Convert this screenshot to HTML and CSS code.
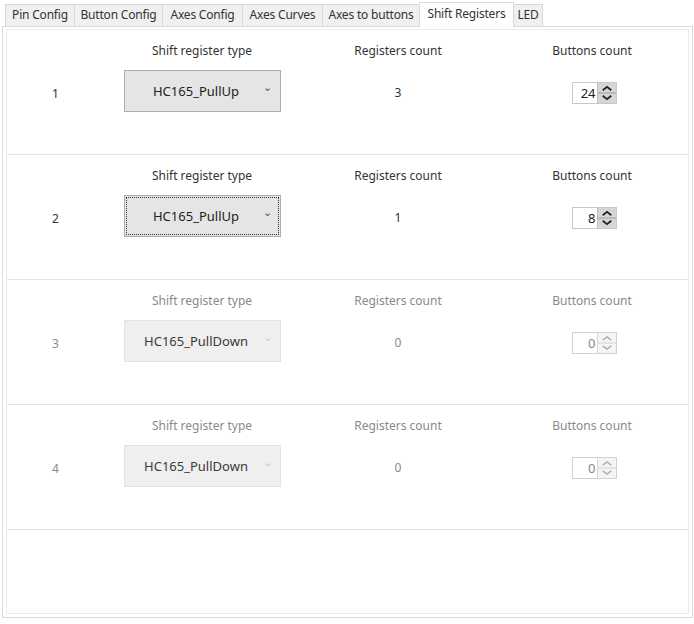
FILE: index.html
```html
<!DOCTYPE html>
<html>
<head>
<meta charset="utf-8">
<link rel="stylesheet" href="styles.css">
</head>
<body>
<div class="app">
  <div class="tabs">
    <div class="tab w1">Pin Config</div>
    <div class="tab w2">Button Config</div>
    <div class="tab w3">Axes Config</div>
    <div class="tab w3">Axes Curves</div>
    <div class="tab w4">Axes to buttons</div>
    <div class="tab active">Shift Registers</div>
    <div class="tab w5">LED</div>
  </div>
  <div class="pane">
    <div class="inner">
      <div class="row">
        <div class="num">1</div>
        <div class="col"><div class="hdr">Shift register type</div><div class="combo"><span>HC165_PullUp</span><span class="arrow">&#8964;</span></div></div>
        <div class="col"><div class="hdr">Registers count</div><div class="val">3</div></div>
        <div class="col"><div class="hdr">Buttons count</div>
          <div class="spin"><div class="sv">24</div><div class="sb"><svg width="19" height="20" viewBox="0 0 19 20"><path d="M5 7 L9.5 3.5 L14 7" fill="none" stroke="#222" stroke-width="2"/><path d="M5 13 L9.5 16.5 L14 13" fill="none" stroke="#222" stroke-width="2"/><line x1="0" y1="10" x2="19" y2="10" stroke="#9a9a9a"/></svg></div></div>
        </div>
      </div>
      <div class="row">
        <div class="num">2</div>
        <div class="col"><div class="hdr">Shift register type</div><div class="combo focus"><span>HC165_PullUp</span><span class="arrow">&#8964;</span></div></div>
        <div class="col"><div class="hdr">Registers count</div><div class="val">1</div></div>
        <div class="col"><div class="hdr">Buttons count</div>
          <div class="spin"><div class="sv">8</div><div class="sb"><svg width="19" height="20" viewBox="0 0 19 20"><path d="M5 7 L9.5 3.5 L14 7" fill="none" stroke="#222" stroke-width="2"/><path d="M5 13 L9.5 16.5 L14 13" fill="none" stroke="#222" stroke-width="2"/><line x1="0" y1="10" x2="19" y2="10" stroke="#9a9a9a"/></svg></div></div>
        </div>
      </div>
      <div class="row disabled">
        <div class="num">3</div>
        <div class="col"><div class="hdr">Shift register type</div><div class="combo"><span>HC165_PullDown</span><span class="arrow">&#8964;</span></div></div>
        <div class="col"><div class="hdr">Registers count</div><div class="val">0</div></div>
        <div class="col"><div class="hdr">Buttons count</div>
          <div class="spin"><div class="sv">0</div><div class="sb"><svg width="19" height="20" viewBox="0 0 19 20"><path d="M5 7 L9.5 3.5 L14 7" fill="none" stroke="#b0b0b0" stroke-width="1.5"/><path d="M5 13 L9.5 16.5 L14 13" fill="none" stroke="#b0b0b0" stroke-width="1.5"/><line x1="0" y1="10" x2="19" y2="10" stroke="#d0d0d0"/></svg></div></div>
        </div>
      </div>
      <div class="row disabled">
        <div class="num">4</div>
        <div class="col"><div class="hdr">Shift register type</div><div class="combo"><span>HC165_PullDown</span><span class="arrow">&#8964;</span></div></div>
        <div class="col"><div class="hdr">Registers count</div><div class="val">0</div></div>
        <div class="col"><div class="hdr">Buttons count</div>
          <div class="spin"><div class="sv">0</div><div class="sb"><svg width="19" height="20" viewBox="0 0 19 20"><path d="M5 7 L9.5 3.5 L14 7" fill="none" stroke="#b0b0b0" stroke-width="1.5"/><path d="M5 13 L9.5 16.5 L14 13" fill="none" stroke="#b0b0b0" stroke-width="1.5"/><line x1="0" y1="10" x2="19" y2="10" stroke="#d0d0d0"/></svg></div></div>
        </div>
      </div>
    </div>
  </div>
</div>
</body>
</html>
```
FILE: styles.css
```css
* { box-sizing: border-box; }
html, body { margin: 0; padding: 0; background: #fff; }
body {
  width: 694px; height: 624px;
  font-family: "Noto Sans", "Open Sans", sans-serif;
  font-size: 12px;
  color: #333;
}
.app { padding: 2px 2px 0 2px; }
.tabs {
  display: flex;
  padding-left: 3px;
  height: 24px;
  align-items: flex-end;
  position: relative;
  z-index: 1;
}
.tab {
  height: 22px;
  line-height: 20px;
  text-align: center;
  background: #f0f0f0;
  border: 1px solid #d9d9d9;
  border-left: none;
  border-bottom: none;
  white-space: nowrap;
  letter-spacing: -0.2px;
}
.w1 { width: 70px; border-left: 1px solid #d9d9d9; }
.w2 { width: 88px; }
.w3 { width: 80px; }
.w4 { width: 97px; }
.w5 { width: 29px; border-left: none; }
.tab.active {
  width: 95px;
  height: 25px;
  line-height: 22px;
  background: #fff;
  border-left: 1px solid #d9d9d9;
  margin-left: -1px;
  margin-bottom: -1px;
}
.pane {
  border: 1px solid #d9d9d9;
  height: 592px;
  width: 691px;
  padding: 2px 3px 3px 3px;
  background: #fff;
}
.inner {
  border: 1px solid #eaeaea;
  height: 100%;
}
.row {
  display: grid;
  grid-template-columns: 97px 196px 196px 1fr;
  height: 125px;
  border-bottom: 1px solid #e3e3e3;
}
.num {
  text-align: center;
  padding-top: 55px;
}
.col {
  display: flex;
  flex-direction: column;
  align-items: center;
}
.hdr {
  margin-top: 12px;
  height: 17px;
  line-height: 17px;
}
.val {
  margin-top: 25px;
}
.combo {
  margin-top: 11px;
  width: 157px;
  height: 42px;
  border: 1px solid #adadad;
  background: #e5e5e5;
  display: flex;
  align-items: center;
  justify-content: center;
  position: relative;
  font-size: 13px;
  color: #222;
}
.combo span:first-child { margin-right: 12px; }
.combo.focus { outline: 1px dotted #333; outline-offset: -3px; }
.arrow {
  position: absolute;
  right: 8px;
  top: 8px;
  font-size: 11px;
  color: #555;
}
.spin {
  margin-top: 23px;
  margin-left: 4px;
  display: flex;
  height: 22px;
  border: 1px solid #c8c8c8;
  background: #fff;
}
.sv {
  width: 24px;
  text-align: right;
  padding-right: 1px;
  line-height: 20px;
  font-size: 13px;
  color: #222;
}
.sb {
  width: 19px;
  background: #d6d6d6;
  border-left: 1px solid #c0c0c0;
  display: flex;
  align-items: center;
  justify-content: center;
}
.disabled { color: #8a8a8a; }
.disabled .combo { background: #efefef; border-color: #e3e3e3; color: #3a3a3a; }
.disabled .arrow { color: #c8c8c8; }
.disabled .spin { border-color: #d0d0d0; }
.disabled .sv { color: #888; }
.disabled .sb { background: #f4f4f4; border-left-color: #d8d8d8; }
```
